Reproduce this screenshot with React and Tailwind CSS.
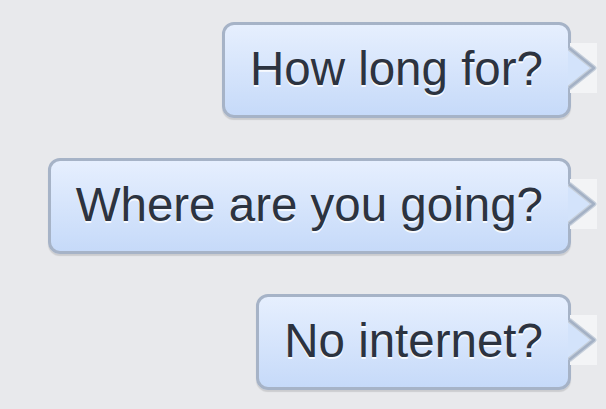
import React from 'react';

const messages = ['How long for?', 'Where are you going?', 'No internet?'];

const Tail = () => (
    <svg
        className="absolute -right-[26px] top-[21px]"
        width="29"
        height="50"
        viewBox="0 0 29 50"
    >
        <rect x="2" y="0" width="27" height="50" fill="#f3f4f6" />
        <polygon points="0,5 26,25 0,45" fill="#d3e3fb" />
        <polyline
            points="1,5 26,25 1,45"
            fill="none"
            stroke="#c6cfdb"
            strokeWidth="5"
            strokeLinejoin="round"
        />
        <polyline
            points="1,5 26,25 1,45"
            fill="none"
            stroke="#a4b1c5"
            strokeWidth="2.5"
            strokeLinejoin="round"
        />
    </svg>
);

const Bubble = ({ text }) => (
    <div className="relative">
        <div className="h-[96px] flex items-center px-[25px] rounded-[12px] border-[3px] border-[#a6b3c7] bg-gradient-to-b from-[#e6effe] to-[#c6daf9] shadow-[0_2px_1px_rgba(0,0,0,0.12)]">
            <span
                className="text-[47.5px] leading-none text-[#2c3340] whitespace-nowrap pb-[3px]"
                style={{ fontFamily: '"Liberation Sans", Arial, sans-serif', textShadow: '0 2px 0 rgba(255,255,255,0.85)' }}
            >
                {text}
            </span>
        </div>
        <Tail />
    </div>
);

export default function App() {
    return (
        <div className="w-[606px] h-[409px] bg-[#e8e9ec] overflow-hidden flex flex-col items-end gap-[40px] pt-[22px] pr-[35px]">
            {messages.map((m) => (
                <Bubble key={m} text={m} />
            ))}
        </div>
    );
}
